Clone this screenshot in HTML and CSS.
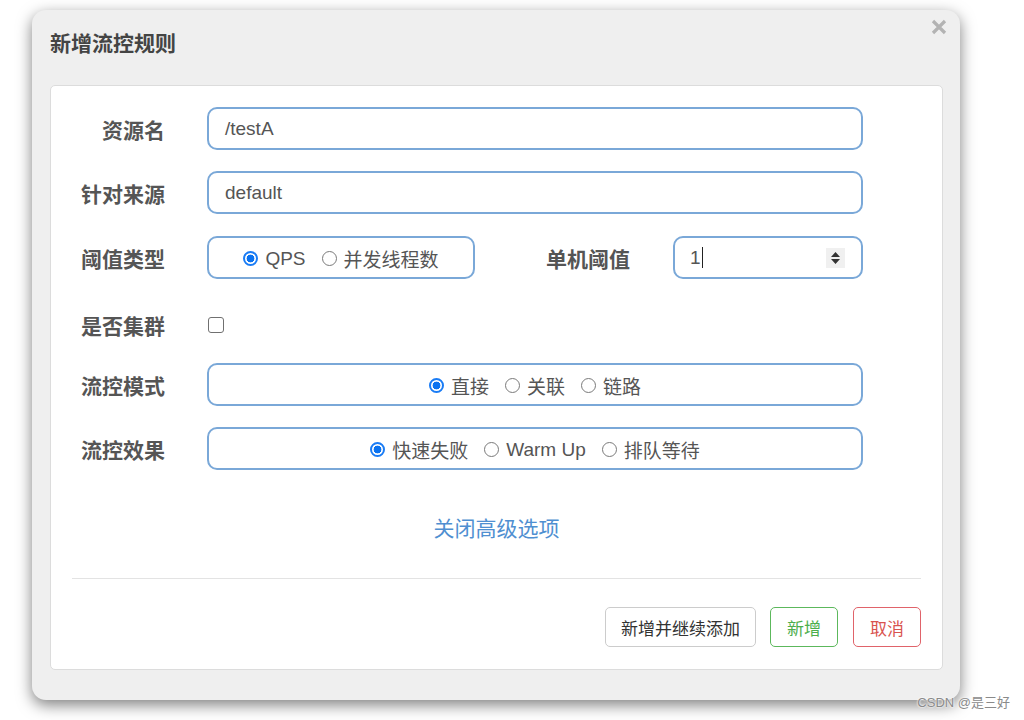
FILE: index.html
```html
<!DOCTYPE html>
<html lang="zh">
<head>
<meta charset="utf-8">
<title>新增流控规则</title>
<link rel="stylesheet" href="styles.css">
</head>
<body>
<div class="modal">
  <div class="modal-header">
    <h4 class="modal-title">新增流控规则</h4>
    <span class="close" aria-label="关闭">
      <svg width="16" height="16" viewBox="0 0 16 16"><path d="M2 2 L14 14 M14 2 L2 14" stroke="#b3b3b3" stroke-width="3.2" fill="none"/></svg>
    </span>
  </div>
  <div class="panel">
    <div class="form-row">
      <label class="form-label">资源名</label>
      <div class="text-input wide"><span class="val">/testA</span></div>
    </div>
    <div class="form-row gap22">
      <label class="form-label">针对来源</label>
      <div class="text-input wide"><span class="val">default</span></div>
    </div>
    <div class="form-row">
      <label class="form-label">阈值类型</label>
      <div class="text-input radio-box small">
        <label class="opt"><input type="radio" name="grade" checked><span>QPS</span></label>
        <label class="opt"><input type="radio" name="grade"><span>并发线程数</span></label>
      </div>
      <label class="form-label second">单机阈值</label>
      <div class="text-input number">
        <span class="val">1<span class="caret"></span></span>
        <span class="spinner">
          <svg width="11" height="14" viewBox="0 0 11 14"><path d="M5.5 1 L10 6 L1 6 Z M1 8 L10 8 L5.5 13 Z" fill="#333"/></svg>
        </span>
      </div>
    </div>
    <div class="form-row check-row">
      <label class="form-label">是否集群</label>
      <input type="checkbox" class="check">
    </div>
    <div class="form-row">
      <label class="form-label">流控模式</label>
      <div class="text-input radio-box wide">
        <label class="opt"><input type="radio" name="strategy" checked><span>直接</span></label>
        <label class="opt"><input type="radio" name="strategy"><span>关联</span></label>
        <label class="opt"><input type="radio" name="strategy"><span>链路</span></label>
      </div>
    </div>
    <div class="form-row gap22">
      <label class="form-label">流控效果</label>
      <div class="text-input radio-box wide">
        <label class="opt"><input type="radio" name="behavior" checked><span>快速失败</span></label>
        <label class="opt"><input type="radio" name="behavior"><span>Warm Up</span></label>
        <label class="opt"><input type="radio" name="behavior"><span>排队等待</span></label>
      </div>
    </div>
    <div class="advanced"><a class="link">关闭高级选项</a></div>
    <div class="divider"></div>
    <div class="footer">
      <button class="btn btn-default">新增并继续添加</button>
      <button class="btn btn-green">新增</button>
      <button class="btn btn-red">取消</button>
    </div>
  </div>
</div>
<div class="watermark">CSDN @是三好</div>
</body>
</html>
```
FILE: styles.css
```css
* { box-sizing: border-box; }
html, body { margin: 0; padding: 0; background: #fff; }
body {
  width: 1024px;
  height: 720px;
  position: relative;
  overflow: hidden;
  font-family: "Liberation Sans", "Noto Sans CJK SC", sans-serif;
  color: #555;
}
.modal {
  position: relative;
  margin: 10px 0 0 32px;
  width: 928px;
  height: 690px;
  background: #efefef;
  border-radius: 14px;
  box-shadow: 0 5px 15px rgba(0,0,0,0.5);
}
.modal-header {
  height: 75px;
  padding: 17px 0 0 18px;
}
.modal-title {
  margin: 0;
  font-size: 21px;
  line-height: 30px;
  font-weight: bold;
  color: #444;
  font-family: "Noto Sans CJK SC", sans-serif;
}
.close {
  position: absolute;
  top: 9px;
  right: 13px;
  width: 16px;
  height: 16px;
  display: block;
}
.close svg { display: block; }
.panel {
  margin: 0 17px 0 18px;
  height: 585px;
  background: #fff;
  border: 1px solid #dcdcdc;
  border-radius: 5px;
  padding: 21px 21px;
  display: flex;
  flex-direction: column;
}
.form-row {
  display: flex;
  align-items: center;
  height: 43px;
  margin-bottom: 21px;
  flex-shrink: 0;
}
.gap22 { margin-bottom: 22px; }
.form-label {
  width: 93px;
  text-align: right;
  margin-right: 42px;
  font-size: 21px;
  font-weight: bold;
  color: #555;
  font-family: "Noto Sans CJK SC", sans-serif;
  flex-shrink: 0;
}
.form-label.second {
  width: 155px;
  margin-right: 43px;
}
.text-input {
  height: 43px;
  border: 2px solid #7aa8d8;
  border-radius: 10px;
  background: #fff;
  display: flex;
  align-items: center;
  padding: 0 16px;
  font-size: 19px;
  color: #555;
  flex-shrink: 0;
}
.text-input.wide { width: 656px; }
.text-input.small { width: 268px; }
.val { line-height: 24px; }
.radio-box {
  justify-content: center;
  padding: 0;
}
.opt {
  display: flex;
  align-items: center;
  margin-right: 16px;
  font-size: 19px;
  color: #555;
  padding-top: 2px;
}
.opt:last-child { margin-right: 0; }
.opt input {
  -webkit-appearance: none;
  appearance: none;
  width: 15px;
  height: 15px;
  margin: 0 7px 0 0;
  border: 1px solid #7a7a7a;
  border-radius: 50%;
  background: #fff;
  flex-shrink: 0;
}
.opt input:checked {
  border: 2px solid #1a7cf5;
  background: radial-gradient(circle, #0a72f0 0 3.6px, #fff 4.2px);
}
.number {
  width: 190px;
  justify-content: space-between;
  padding: 0 16px 0 15px;
}
.caret {
  display: inline-block;
  width: 1px;
  height: 21px;
  background: #222;
  vertical-align: -4px;
  margin-left: 1px;
}
.spinner {
  width: 19px;
  height: 20px;
  background: #f0f0f0;
  display: flex;
  align-items: center;
  justify-content: center;
}
.spinner svg { display: block; }
.check-row {
  height: 50px;
  margin-bottom: 13px;
}
.check {
  -webkit-appearance: none;
  appearance: none;
  width: 16px;
  height: 16px;
  margin: 0 0 0 1px;
  border: 1.6px solid #707070;
  border-radius: 3px;
  background: #fff;
}
.advanced {
  margin-top: 20px;
  text-align: center;
  line-height: 30px;
  height: 30px;
}
.link {
  font-size: 21px;
  color: #4f8fd1;
  font-family: "Noto Sans CJK SC", sans-serif;
  cursor: pointer;
}
.divider {
  margin-top: 36px;
  height: 1px;
  background: #e3e3e3;
  flex-shrink: 0;
}
.footer {
  margin-top: 28px;
  display: flex;
  justify-content: flex-end;
  gap: 14px;
}
.btn {
  height: 40px;
  padding: 0;
  white-space: nowrap;
  font-size: 17px;
  font-family: "Noto Sans CJK SC", sans-serif;
  background: #fff;
  border-radius: 5px;
  border: 1px solid #ccc;
  color: #333;
  cursor: pointer;
}
.btn-default { width: 151px; }
.btn-green { width: 68px; border-color: #5cb85c; color: #4cae4c; }
.btn-red { width: 68px; border-color: #e0636a; color: #d9534f; margin-left: 1px; }
.watermark {
  position: absolute;
  right: 14px;
  bottom: 9px;
  font-size: 13px;
  color: #8a8a8a;
  font-family: "Liberation Sans", "Noto Sans CJK SC", sans-serif;
  text-shadow: 0 0 2px #fff, 0 0 2px #fff;
}
```
